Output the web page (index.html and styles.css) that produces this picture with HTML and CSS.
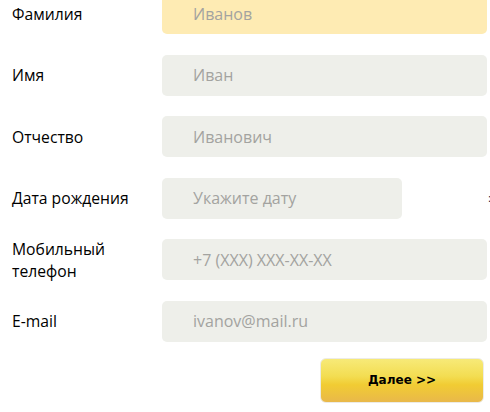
FILE: index.html
```html
<!DOCTYPE html>
<html>
<head>
    <title>Анкета</title>
    <link rel="stylesheet" href="styles.css">
</head>
<body>
    <form class="form">
        <div class="row">
            <label class="label" for="last_name">Фамилия</label>
            <input class="field field-active" type="text" id="last_name" placeholder="Иванов">
        </div>
        <div class="row">
            <label class="label" for="first_name">Имя</label>
            <input class="field" type="text" id="first_name" placeholder="Иван">
        </div>
        <div class="row">
            <label class="label" for="middle_name">Отчество</label>
            <input class="field" type="text" id="middle_name" placeholder="Иванович">
        </div>
        <div class="row">
            <label class="label" for="birth_date">Дата рождения</label>
            <input class="field field-short" type="text" id="birth_date" placeholder="Укажите дату">
            <span class="hint">:</span>
        </div>
        <div class="row">
            <label class="label" for="phone">Мобильный<br>телефон</label>
            <input class="field" type="text" id="phone" placeholder="+7 (XXX) XXX-XX-XX">
        </div>
        <div class="row">
            <label class="label" for="email">E-mail</label>
            <input class="field" type="text" id="email" placeholder="ivanov@mail.ru">
        </div>
        <div class="actions">
            <button type="button" class="next">Далее &gt;&gt;</button>
        </div>
    </form>
</body>
</html>
```

FILE: styles.css
```css
body {
    font-family: "Open Sans", "Noto Sans", sans-serif;
    background-color: #fff;
    margin: 0;
    padding: 0;
}

.form {
    margin-top: -7px;
    width: 490px;
}

.row {
    display: flex;
    align-items: center;
    height: 41px;
    margin-bottom: 20.6px;
}

.label {
    width: 150px;
    padding-left: 12px;
    font-size: 15.7px;
    line-height: 22px;
    color: #000;
}

.field {
    width: 325px;
    height: 41px;
    box-sizing: border-box;
    border: none;
    border-radius: 5px;
    background-color: #eeefea;
    padding: 0 0 0 31px;
    font-family: inherit;
    font-size: 16px;
    color: #333;
    outline: none;
}

.field::placeholder {
    color: #a3a3a0;
}

.field-active {
    background-color: #feebb3;
}

.field-short {
    width: 240px;
}

.hint {
    margin-left: auto;
    margin-right: -1px;
    font-size: 10px;
    color: #000;
}

.actions {
    display: flex;
    justify-content: flex-end;
    padding-right: 6px;
    margin-top: -5px;
}

/* Yellow button with a soft gloss */
.next {
    width: 164px;
    height: 45px;
    border: 1px solid #ecebe6;
    border-radius: 6px;
    background: linear-gradient(#f7ea78 0%, #f3dd52 40%, #f1cc33 60%, #e9b84a 100%);
    font-family: "DejaVu Sans", sans-serif;
    font-weight: bold;
    font-size: 12px;
    color: #000;
    cursor: pointer;
}
```
